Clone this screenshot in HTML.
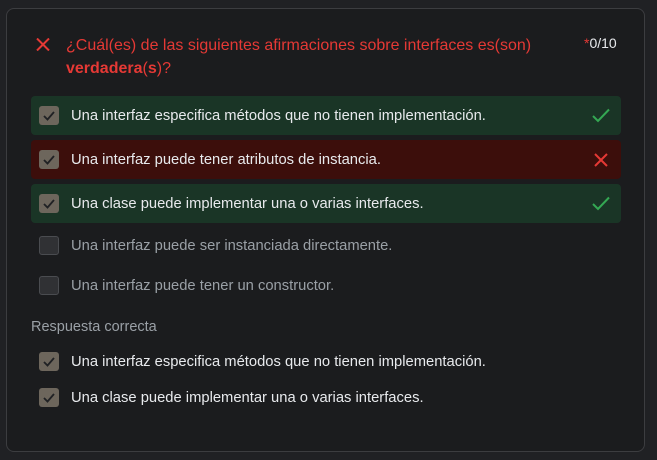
<!DOCTYPE html>
<html><head><style>
body{margin:0;background:#202124;width:657px;height:460px;position:relative;font-family:"Liberation Sans",sans-serif;overflow:hidden}
.card{position:absolute;left:6px;top:8px;width:637px;height:442px;background:#1b1c1e;border:1px solid #3c3d40;border-radius:8px}
.a{position:absolute}
.row{position:absolute;left:31px;width:590px;height:39px;border-radius:4px}
.cb{position:absolute;left:39px;width:20px;height:19px;border-radius:3px;background:#6d665c}
.cb svg{position:absolute;left:3px;top:3px}
.cb.e{background:#303134;border:1px solid #4a4c50;box-sizing:border-box}
.t{position:absolute;left:71px;font-size:14.75px;color:#e8eaed;white-space:nowrap}
.g{color:#9aa0a6}
</style></head><body>
<div class="card"></div>
<svg class="a" style="left:36px;top:38px" width="14" height="13" viewBox="0 0 14 13"><path d="M1 0.5L13 12.5M13 0.5L1 12.5" stroke="#e53935" stroke-width="2"/></svg>
<div class="a" style="left:66px;top:34px;font-size:16px;color:#e53935;line-height:23px;width:490px">¿Cuál(es) de las siguientes afirmaciones sobre interfaces es(son) <b>verdadera</b>(<b>s</b>)?</div>
<div class="a" style="left:584px;top:35px;font-size:14px;color:#e8eaed"><span style="color:#e53935">*</span>0/10</div>

<div class="row" style="top:96px;background:#1a3526"></div>
<div class="row" style="top:140px;background:#3c0e0b"></div>
<div class="row" style="top:184px;background:#1a3526"></div>

<div class="cb" style="top:106px"><svg width="14" height="13"><path d="M2 7L5.5 10.5L12 3" stroke="#202124" stroke-width="1.8" fill="none"/></svg></div>
<div class="t" style="top:108px">Una interfaz especifica métodos que no tienen implementación.</div>
<svg class="a" style="left:592px;top:108px" width="18" height="15"><path d="M1 8L6 13L17 1.5" stroke="#34a853" stroke-width="2" fill="none"/></svg>

<div class="cb" style="top:150px"><svg width="14" height="13"><path d="M2 7L5.5 10.5L12 3" stroke="#202124" stroke-width="1.8" fill="none"/></svg></div>
<div class="t" style="top:152px">Una interfaz puede tener atributos de instancia.</div>
<svg class="a" style="left:594px;top:153px" width="14" height="14"><path d="M1 1L13 13M13 1L1 13" stroke="#e53935" stroke-width="2"/></svg>

<div class="cb" style="top:194px"><svg width="14" height="13"><path d="M2 7L5.5 10.5L12 3" stroke="#202124" stroke-width="1.8" fill="none"/></svg></div>
<div class="t" style="top:196px">Una clase puede implementar una o varias interfaces.</div>
<svg class="a" style="left:592px;top:196px" width="18" height="15"><path d="M1 8L6 13L17 1.5" stroke="#34a853" stroke-width="2" fill="none"/></svg>

<div class="cb e" style="top:236px"></div>
<div class="t g" style="top:238px">Una interfaz puede ser instanciada directamente.</div>
<div class="cb e" style="top:276px"></div>
<div class="t g" style="top:278px">Una interfaz puede tener un constructor.</div>

<div class="a" style="left:31px;top:319px;font-size:14.5px;color:#9aa0a6">Respuesta correcta</div>

<div class="cb" style="top:352px"><svg width="14" height="13"><path d="M2 7L5.5 10.5L12 3" stroke="#202124" stroke-width="1.8" fill="none"/></svg></div>
<div class="t" style="top:354px">Una interfaz especifica métodos que no tienen implementación.</div>
<div class="cb" style="top:388px"><svg width="14" height="13"><path d="M2 7L5.5 10.5L12 3" stroke="#202124" stroke-width="1.8" fill="none"/></svg></div>
<div class="t" style="top:390px">Una clase puede implementar una o varias interfaces.</div>
</body></html>
